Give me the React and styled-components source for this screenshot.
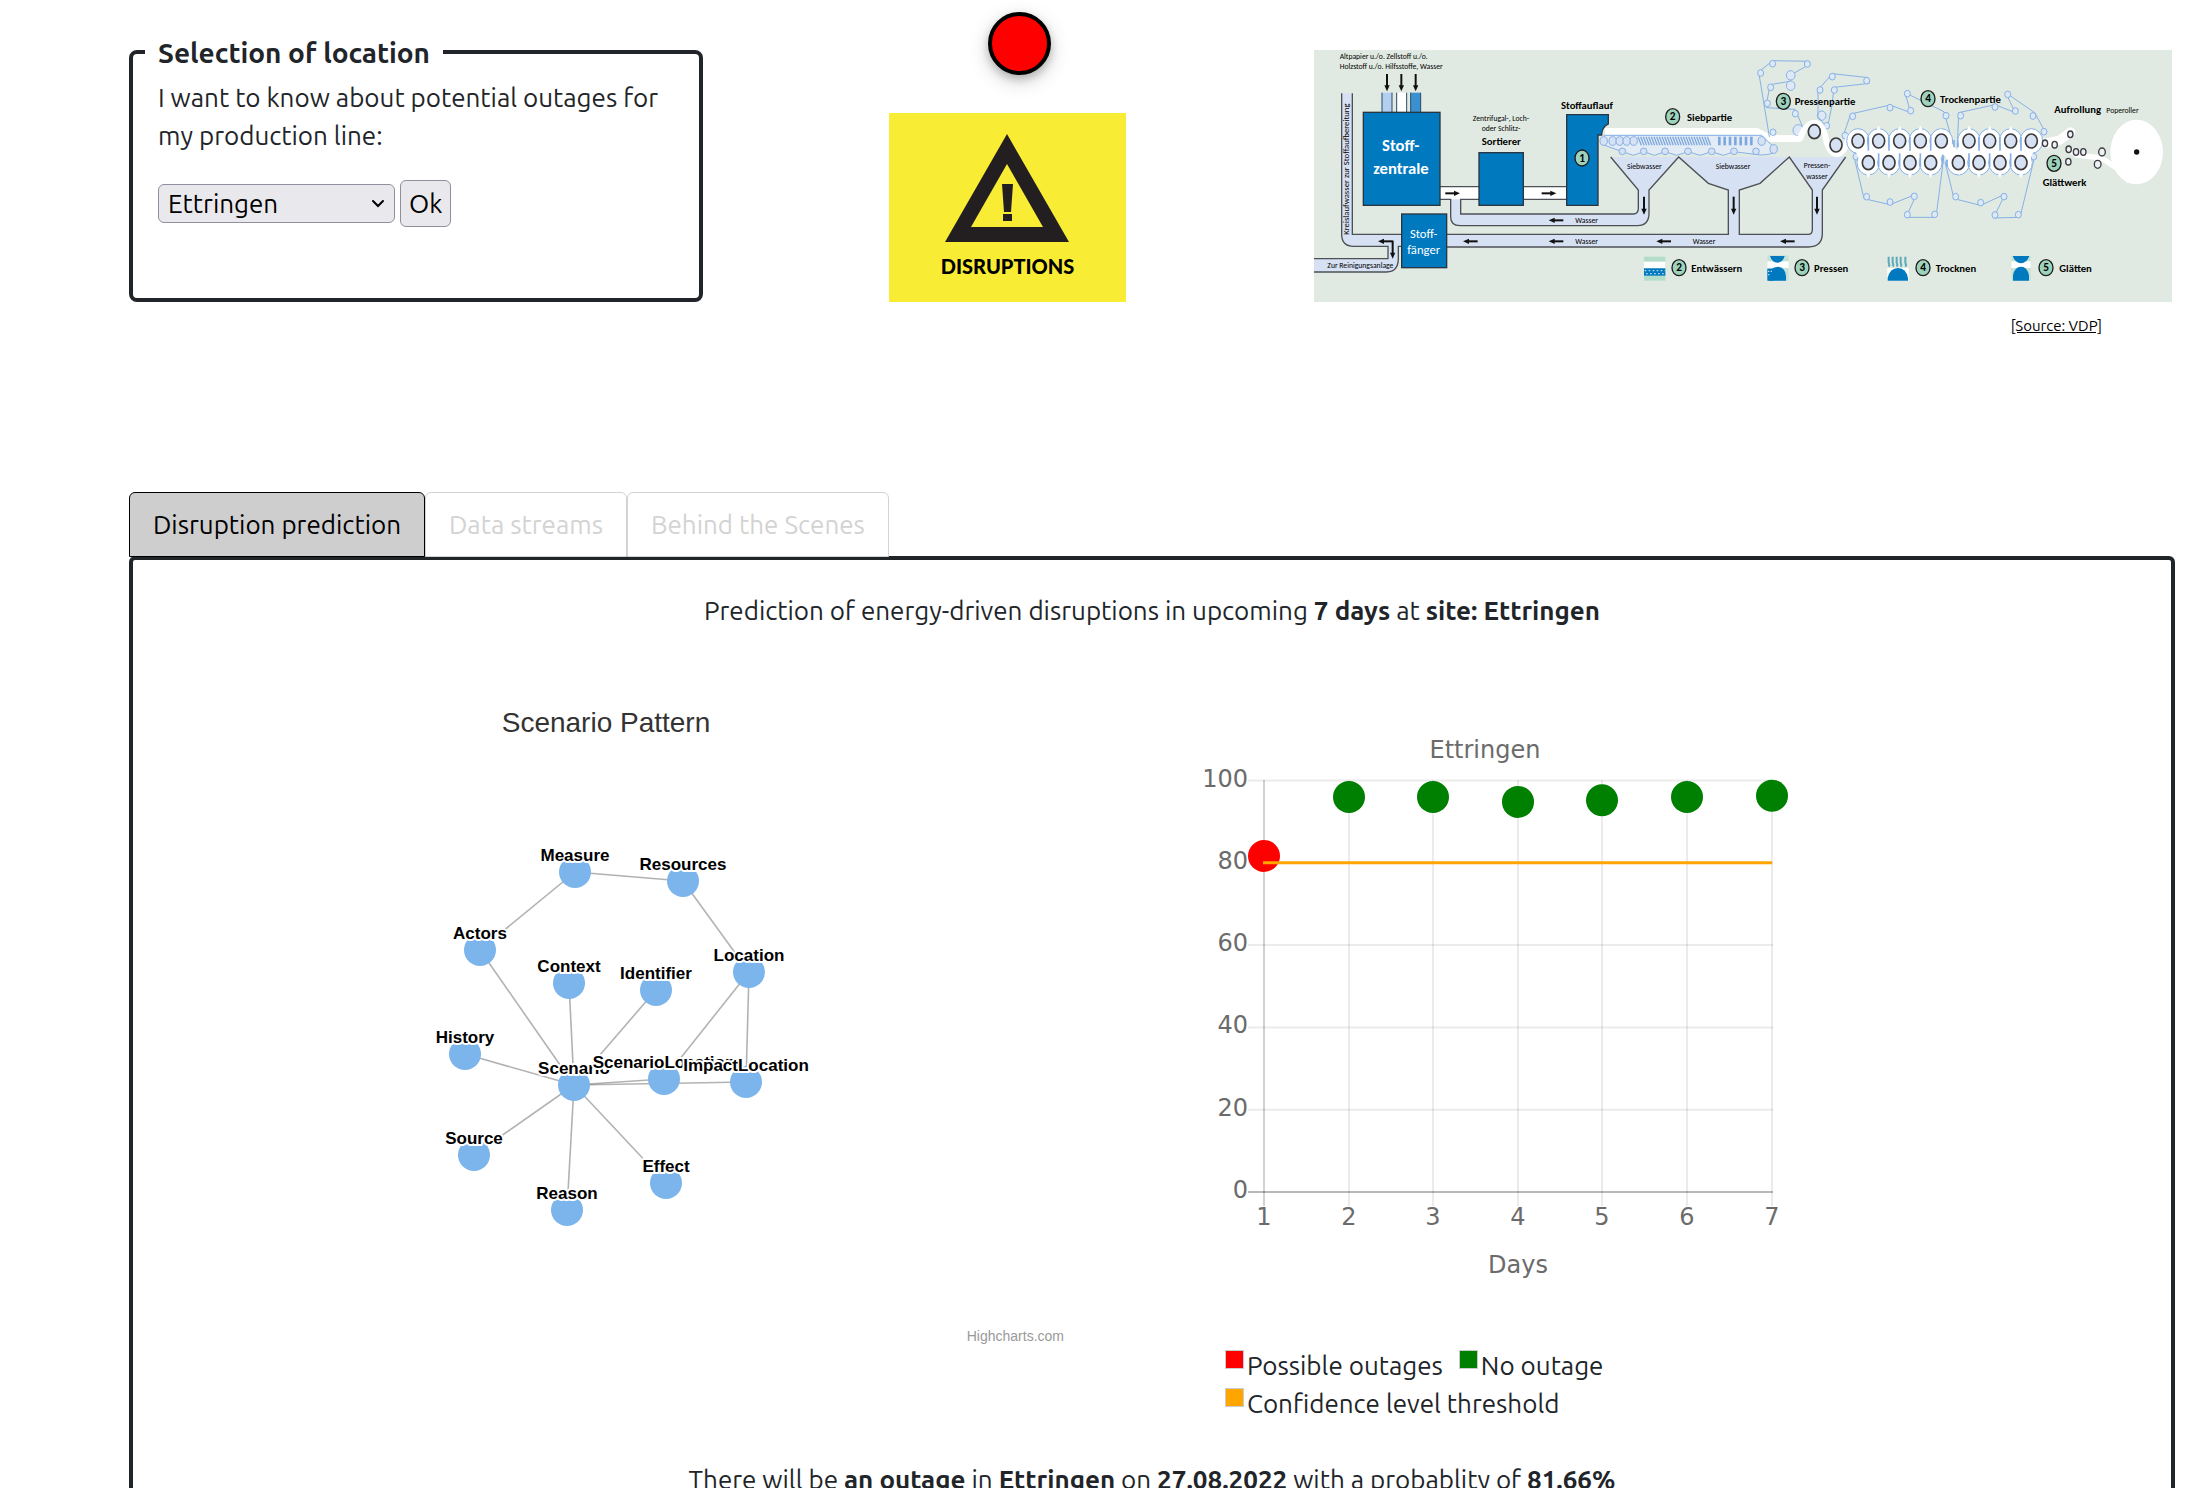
import React, { useState } from "react";
import styled, { createGlobalStyle } from "styled-components";

const INK = "#212529";
const UI_FONT = 'Ubuntu, "Noto Sans", "Open Sans", sans-serif';

const GlobalStyle = createGlobalStyle`
  *, *::before, *::after { box-sizing: border-box; }
  body {
    margin: 0;
    background: #fff;
    color: ${INK};
    font-family: ${UI_FONT};
    font-size: 26px;
    line-height: 38px;
    overflow-x: hidden;
  }
`;

/* ---------- page ---------- */

const Page = styled.div`
  padding: 0 15px 60px 129px;
`;

const TopRow = styled.header`
  display: grid;
  grid-template-columns: 574fr 611fr 858fr;
  align-items: end;
  padding: 12px 3px 0 0;
`;

const SourceRow = styled.div`
  display: flex;
  justify-content: flex-end;
  padding: 13px 73px 0 0;
  font-size: 15px;
  line-height: 22px;
`;

const SourceLink = styled.a`
  color: #000;
  text-decoration: underline;
`;

/* ---------- location form ---------- */

const LocationBox = styled.fieldset`
  min-width: 0;
  height: 271px;
  margin: 0;
  padding: 0 12px;
  border: 4px solid ${INK};
  border-radius: 8px;
`;

const LocationTitle = styled.legend`
  padding: 2px 13px 0;
  font-size: 28px;
  font-weight: 600;
  line-height: 40px;
`;

const LocationBody = styled.div`
  padding: 6px 13px 0;
`;

const Question = styled.label`
  display: block;
  margin-bottom: 25px;
`;

const Controls = styled.div`
  display: flex;
  align-items: center;
  gap: 5px;
`;

const SelectWrap = styled.div`
  display: grid;
  align-items: center;
  width: 237px;

  & > * { grid-area: 1 / 1; }
`;

const Select = styled.select`
  appearance: none;
  width: 100%;
  height: 39px;
  padding: 0 32px 0 9px;
  border: 1px solid #8f8f9d;
  border-radius: 6px;
  background: #e9e9ed;
  color: #000;
  font: inherit;
  line-height: 36px;
`;

const Chevron = styled.svg`
  justify-self: end;
  width: 14px;
  height: 9px;
  margin-right: 10px;
  pointer-events: none;
`;

const OkButton = styled.button`
  height: 47px;
  padding: 0 8px;
  border: 1px solid #8f8f9d;
  border-radius: 6px;
  background: #e9e9ed;
  color: #000;
  font: inherit;
`;

/* ---------- status ---------- */

const Status = styled.div`
  display: flex;
  flex-direction: column;
  align-items: center;
  gap: 38px;
  padding-right: 2px;
`;

const Lamp = styled.div`
  width: 63px;
  height: 63px;
  margin-left: 24px;
  border: 4px solid #000;
  border-radius: 50%;
  background: #f00;
  box-shadow: 0 4px 8px rgba(0, 0, 0, 0.2), 0 6px 20px rgba(0, 0, 0, 0.19);
`;

const WarningCard = styled.div`
  display: flex;
  flex-direction: column;
  align-items: center;
  gap: 11px;
  width: 237px;
  height: 189px;
  padding-top: 21px;
  background: #f8ec34;
  color: #000;
  font-family: Lato, sans-serif;
  font-size: 20px;
  font-weight: 900;
  line-height: 24px;
`;

const WarningSign = styled.svg`
  width: 125px;
  height: 109px;
`;

/* ---------- tabs and panel ---------- */

const TabBar = styled.div`
  display: flex;
  margin-top: 155px;
`;

const Tab = styled.button`
  position: relative;
  height: 65px;
  margin-bottom: -1px;
  padding: 0 23px;
  border: 1px solid ${(p) => (p.$active ? "#000" : "#d3d3d3")};
  border-radius: 6px 6px 0 0;
  background: ${(p) => (p.$active ? "#cecece" : "#fff")};
  color: ${(p) => (p.$active ? "#000" : "#d3d3d3")};
  font: inherit;
`;

const Panel = styled.main`
  padding: 32px 0 60px;
  border: 4px solid ${INK};
  border-radius: 6px;
`;

const Sentence = styled.p`
  margin: 0;
  text-align: center;
`;

const Charts = styled.div`
  display: grid;
  grid-template-columns: 947fr 1091fr;
  margin: 61px 0 38px;
`;

const Graph = styled.svg`
  display: block;
  width: 100%;
  font-family: "Liberation Sans", Arial, sans-serif;
`;

const Forecast = styled.section`
  padding: 33px 0 0 110px;
`;

const Plot = styled.svg`
  display: block;
  width: 620px;
  height: 562px;
  max-width: 100%;
  font-family: "DejaVu Sans", sans-serif;
  font-size: 24px;
  fill: #6b6b6b;
`;

const Legend = styled.ul`
  display: flex;
  flex-wrap: wrap;
  column-gap: 16px;
  max-width: 440px;
  margin: 61px 0 0;
  padding: 0 0 0 35px;
  list-style: none;
`;

const LegendItem = styled.li`
  display: flex;
  gap: 3px;
`;

const Swatch = styled.span`
  width: 19px;
  height: 19px;
  margin-top: 3px;
  border: 1px solid #ccc;
  background: ${(p) => p.$color};
`;

/* ---------- paper machine drawing ---------- */

const MachineSvg = styled.svg`
  display: block;
  width: 100%;
  font-family: Carlito, "Open Sans", sans-serif;
`;

const BLUE = "#0079bf";
const WATER = "#d7e1f4";
const BELT = "#86b1e6";

const Arrow = ({ x, y, turn = 0, len = 44 }) => (
  <g transform={`translate(${x} ${y}) rotate(${turn})`}>
    <path d={`M0 0H${len - 14}`} stroke="#111" strokeWidth="6" />
    <path d={`M${len} 0l-18 -8v16z`} fill="#111" />
  </g>
);

const Badge = ({ x, y, n }) => (
  <g>
    <ellipse cx={x} cy={y} rx="21" ry="24" fill="#9dd2bc" stroke="#1d1d1d" strokeWidth="4" />
    <text x={x} y={y + 11} fontSize="34" fontWeight="700" textAnchor="middle">{n}</text>
  </g>
);

const Belt = ({ points, dots = points, r = 9, closed }) => (
  <g fill="none" stroke={BELT} strokeWidth="3">
    {closed ? <polygon points={points.join(" ")} /> : <polyline points={points.join(" ")} />}
    {dots.map(([x, y], i) => (
      <ellipse key={i} cx={x} cy={y} rx={r} ry={r + 1} fill="#dfe8f5" />
    ))}
  </g>
);

const Roller = ({ x, y, rx = 18, ry = 21 }) => (
  <ellipse cx={x} cy={y} rx={rx} ry={ry} fill={WATER} stroke="#3b3b3b" strokeWidth="5" />
);

const upper = [354, 416, 479, 541, 604, 687, 749, 812, 874];
const lower = [385, 447, 510, 572, 655, 717, 780, 843];
const weave = (from, to) =>
  [...upper.map((x) => [x, 303]), ...lower.map((x) => [x, 368])]
    .filter(([x]) => x >= from && x <= to)
    .sort((a, b) => a[0] - b[0]);

function PaperMachine() {
  return (
    <MachineSvg viewBox="0 0 2574 756" role="img" aria-label="Papiermaschine">
      <rect width="2574" height="756" fill="#e0eae2" />
      <g transform="translate(-42 -30)">
        <g fill={WATER}>
          <path d="M125 160H157V583H305V619H295V655Q295 696 260 696H42V656H264V619H161Q125 619 125 583Z" />
          <path d="M440 583H1285V450L1225 430L1136 351L1047 450V520Q1047 557 1012 557H480Q452 557 452 530V478H482V522H1000Q1015 522 1015 505V450L932 351H1637L1567 450V580Q1567 621 1525 621H440Z" />
        </g>
        <path d="M452 557H1047V583H452ZM1047 450L1136 351L1225 430L1285 450V583H1047ZM1318 583V450L1380 430L1468 351L1537 450V583Z" fill="#e0eae2" />
        <path d="M452 530V478H482V522H1000Q1015 522 1015 505V450H1047V520Q1047 557 1012 557H480Q452 557 452 530Z" fill={WATER} />
        <rect x="420" y="440" width="380" height="38" fill="#fff" />
        <g fill="none" stroke="#4d5055" strokeWidth="4">
          <path d="M125 160V583Q125 619 161 619H264V656H42M157 160V583H305M305 619H295V655Q295 696 260 696H42" />
          <path d="M440 583H1285V450L1225 430L1136 351L1047 450V520Q1047 557 1012 557H480Q452 557 452 530V478H420M420 440H800M800 478H482V522H1000Q1015 522 1015 505V450L932 351" />
          <path d="M1318 583V450L1380 430L1468 351L1537 450V570Q1537 583 1524 583ZM440 621H1525Q1567 621 1567 580V450L1637 351" />
        </g>
        <g stroke="#2b4a66" strokeWidth="3">
          <rect x="246" y="158" width="30" height="60" fill="#b3cef0" stroke="none" />
          <rect x="290" y="158" width="30" height="60" fill="#fff" stroke="none" />
          <rect x="332" y="158" width="30" height="60" fill="#3b90d2" stroke="none" />
          <path d="M246 158V218M276 158V218M290 158V218M320 158V218M332 158V218M362 158V218" />
        </g>
        <g fill={BLUE} stroke="#2a3540" strokeWidth="4">
          <rect x="190" y="217" width="230" height="279" />
          <rect x="537" y="338" width="133" height="158" />
          <rect x="305" y="522" width="135" height="161" />
          <path d="M800 224H925V252Q905 262 905 285H894V496H800Z" />
        </g>
        {[261, 304, 347].map((x) => <Arrow key={x} x={x} y={102} turn={90} len={52} />)}
        <Arrow x={436} y={460} />
        <Arrow x={725} y={460} />
        <Arrow x={790} y={541} turn={180} />
        <Arrow x={790} y={604} turn={180} />
        <Arrow x={533} y={604} turn={180} />
        <Arrow x={1113} y={604} turn={180} />
        <Arrow x={1484} y={604} turn={180} />
        <Arrow x={278} y={604} turn={180} />
        <Arrow x={278} y={602} turn={90} len={54} />
        <Arrow x={1032} y={470} turn={90} len={54} />
        <Arrow x={1301} y={470} turn={90} len={54} />
        <Arrow x={1551} y={470} turn={90} len={54} />

        <path d="M915 274H1370L1412 296H1495" fill="none" stroke="#fff" strokeWidth="20" />
        <path d="M911 286H1385L1430 330Q1420 345 1380 345L1302 335L1270 346L1235 335L1200 346L1164 335L1130 346L1095 335L1063 346L1031 335L1000 346L967 335L903 312" fill="#e3ecf4" stroke={BELT} strokeWidth="3" />
        <g fill={WATER} stroke={BELT} strokeWidth="3">
          {[911, 938, 959, 980, 1001, 1385, 1421].map((x) => (
            <ellipse key={x} cx={x} cy={x === 1421 ? 327 : 303} rx="11" ry="13" />
          ))}
          {[967, 1031, 1095, 1164, 1235, 1302, 1368].map((x) => (
            <circle key={x} cx={x} cy="334" r="10" />
          ))}
        </g>
        <g stroke="#7fa9de" strokeWidth="4">
          {Array.from({ length: 27 }, (_, i) => (
            <path key={i} d={`M${1014 + i * 8} 290l10 26`} />
          ))}
          {Array.from({ length: 7 }, (_, i) => (
            <path key={i} strokeWidth="8" d={`M${1258 + i * 16} 290v26`} />
          ))}
        </g>

        <g fontSize="23">
          <text x="119" y="57">Altpapier u./o. Zellstoff u./o.</text>
          <text x="119" y="88">Holzstoff u./o. Hilfsstoffe, Wasser</text>
          <text x="603" y="243" textAnchor="middle">Zentrifugal-, Loch-</text>
          <text x="603" y="273" textAnchor="middle">oder Schlitz-</text>
          <text x="1033" y="388" textAnchor="middle">Siebwasser</text>
          <text x="1299" y="388" textAnchor="middle">Siebwasser</text>
          <text x="1551" y="383" textAnchor="middle">Pressen-</text>
          <text x="1551" y="416" textAnchor="middle">wasser</text>
          <text x="860" y="549" textAnchor="middle">Wasser</text>
          <text x="860" y="612" textAnchor="middle">Wasser</text>
          <text x="1212" y="612" textAnchor="middle">Wasser</text>
          <text x="82" y="685">Zur Reinigungsanlage</text>
          <text transform="translate(148 584) rotate(-90)" fontSize="26">Kreislaufwasser zur Stoffaufbereitung</text>
        </g>
        <g fontSize="32" fontWeight="700">
          <text x="783" y="207">Stoffauflauf</text>
          <text x="604" y="315" textAnchor="middle">Sortierer</text>
          <text x="1161" y="242">Siebpartie</text>
          <text x="1174" y="695">Entwässern</text>
        </g>
        <g fill="#fff" textAnchor="middle">
          <text x="302" y="332" fontSize="50" fontWeight="700">Stoff-</text>
          <text x="303" y="403" fontSize="50" fontWeight="700">zentrale</text>
          <text x="371" y="594" fontSize="38">Stoff-</text>
          <text x="371" y="642" fontSize="38">fänger</text>
        </g>
        <Badge x={846} y={354} n="1" />
        <Badge x={1118} y={230} n="2" />
        <Badge x={1137} y={683} n="2" />
        <rect x="1032" y="650" width="64" height="72" fill="#b3dccb" />
        <rect x="1032" y="665" width="64" height="20" fill="#fff" />
        <rect x="1032" y="685" width="64" height="22" fill={BLUE} />
        <path d="M1034 692H1096M1038 701H1096" stroke="#bcd8ef" strokeWidth="4" strokeDasharray="5 7" />
      </g>

      <g transform="translate(1278 -30)">
        <Belt closed points={[[98, 62], [208, 64], [200, 78], [152, 105], [150, 124], [90, 134], [80, 190], [80, 203], [165, 208], [190, 265], [175, 292], [88, 290], [56, 96]]} dots={[[98, 71], [202, 72], [62, 99], [92, 142], [82, 190], [166, 221], [99, 277]]} />
        <Belt points={[]} dots={[[152, 106], [152, 137], [245, 227]]} r={13} />
        <Belt points={[]} dots={[[175, 271]]} r={16} />
        <Belt closed points={[[277, 101], [385, 113], [388, 130], [282, 142], [276, 196], [262, 264], [234, 230], [234, 150]]} dots={[[277, 110], [380, 122], [240, 150], [283, 150], [260, 257]]} />
        <Belt points={[[309, 290], [332, 222], [450, 195], [512, 218], [495, 158], [612, 215], [642, 322]]} dots={[[315, 287], [338, 229], [450, 203], [512, 212], [502, 161], [618, 227]]} />
        <Belt points={[[652, 322], [656, 218], [765, 194], [826, 218], [797, 158], [884, 218], [918, 280]]} dots={[[662, 227], [765, 201], [826, 213], [803, 163], [879, 228], [912, 275]]} />
        <Belt points={[[342, 350], [372, 476], [450, 494], [530, 462], [498, 532], [588, 532], [612, 345]]} dots={[[348, 350], [380, 470], [450, 486], [523, 469], [502, 524], [584, 523]]} />
        <Belt points={[[615, 365], [642, 476], [722, 496], [796, 462], [760, 534], [840, 532], [884, 350]]} dots={[[647, 470], [722, 488], [792, 470], [765, 525], [835, 524], [881, 350]]} />

        <g fill="none" stroke="#fff" strokeLinejoin="round">
          <path d="M90 296H180Q196 250 223 248Q250 250 258 300Q270 342 290 342Q312 340 322 304Q332 276 354 274" strokeWidth="18" />
          <path d="M874 300L915 310L960 300L992 276" strokeWidth="28" strokeLinecap="round" />
          <path d="M986 328L1010 345L1085 354L1140 392" strokeWidth="16" strokeLinecap="round" />
        </g>
        <g fill="#fff" stroke={BELT} strokeWidth="3">
          {weave(300, 900).map(([x, y]) => (
            <ellipse key={x} cx={x} cy={y} rx="34" ry="37" />
          ))}
        </g>
        <polyline points={weave(300, 900).join(" ")} fill="none" stroke="#fff" strokeWidth="40" />
        <g stroke={BELT} strokeWidth="5">
          {[385, 447, 510, 572, 717, 780, 843].map((x) => <path key={x} d={`M${x} 290v42`} />)}
          {[416, 479, 541, 687, 749, 812].map((x) => <path key={x} d={`M${x} 340v42`} />)}
          <path d="M642 300v22M653 300v22M608 345v26M620 360v20" />
        </g>
        {weave(300, 900).map(([x, y]) => <Roller key={x} x={x} y={y} />)}
        <Roller x={223} y={275} />
        <Roller x={288} y={315} />
        <ellipse cx="1190" cy="336" rx="79" ry="97" fill="#fff" />
        <path d="M1120 380L1160 428L1190 433L1180 360Z" fill="#fff" />
        <circle cx="1190" cy="336" r="8" fill="#111" />
        <g fill="#eef1f4" stroke="#3d3d44" strokeWidth="4">
          {[[915, 310], [944, 314], [991, 283], [986, 328], [1008, 336], [1030, 336], [985, 365]].map(([x, y]) => (
            <ellipse key={`${x}-${y}`} cx={x} cy={y} rx="8" ry="10" />
          ))}
          <ellipse cx="1086" cy="336" rx="10" ry="12" />
          <ellipse cx="1073" cy="373" rx="10" ry="12" />
        </g>

        <g fontSize="32" fontWeight="700">
          <text x="164" y="196">Pressenpartie</text>
          <text x="600" y="188">Trockenpartie</text>
          <text x="943" y="220">Aufrollung</text>
          <text x="908" y="438">Glättwerk</text>
          <text x="222" y="695">Pressen</text>
          <text x="587" y="695">Trocknen</text>
          <text x="958" y="695">Glätten</text>
        </g>
        <text x="1099" y="218" fontSize="23">Poperoller</text>
        <Badge x={130} y={184} n="3" />
        <Badge x={564} y={176} n="4" />
        <Badge x={942} y={370} n="5" />
        <Badge x={186} y={683} n="3" />
        <Badge x={549} y={683} n="4" />
        <Badge x={918} y={683} n="5" />

        <g fill={BLUE}>
          <rect x="82" y="646" width="64" height="76" fill="#c6e2d6" />
          <path d="M82 664H146V684H82Z" fill="#fff" />
          <path d="M90 648H134Q128 668 112 668Q96 668 90 648Z" />
          <path d="M86 722V712Q88 680 114 680Q136 682 138 708V722Z" />
          <path d="M82 686H100V722H82Z" />
          <path d="M84 694H96M84 704H92" stroke="#bcd8ef" strokeWidth="4" strokeDasharray="4 4" />
          <path d="M442 684H506V722H442Z" fill="#fff" />
          <path d="M443 722V714Q450 684 474 684Q498 684 504 714V722Z" />
          <path d="M446 650v18q4 6 0 12M458 650v18q4 6 0 12M470 650v18q4 6 0 12M482 650v18q4 6 0 12M496 650v18q4 6 0 12" fill="none" stroke="#5fa9b8" strokeWidth="6" />
          <path d="M814 648H872V722H814Z" fill="#c6e2d6" />
          <path d="M814 664H872V684H814Z" fill="#fff" />
          <path d="M818 648H868Q860 670 843 670Q826 670 818 648Z" />
          <path d="M819 722V706Q824 680 843 680Q862 680 867 706V722Z" />
        </g>
      </g>
    </MachineSvg>
  );
}

/* ---------- scenario graph ---------- */

const nodes = {
  Scenario: [574, 1085],
  Measure: [575, 872],
  Resources: [683, 881],
  Actors: [480, 950],
  Context: [569, 983],
  Identifier: [656, 990],
  Location: [749, 972],
  History: [465, 1054],
  ScenarioLocation: [664, 1079],
  ImpactLocation: [746, 1082],
  Source: [474, 1155],
  Reason: [567, 1210],
  Effect: [666, 1183],
};

const links = [
  ["Measure", "Resources"], ["Measure", "Actors"], ["Resources", "Location"],
  ["Actors", "Scenario"], ["Context", "Scenario"], ["Identifier", "Scenario"],
  ["History", "Scenario"], ["Source", "Scenario"], ["Reason", "Scenario"],
  ["Effect", "Scenario"], ["ScenarioLocation", "Scenario"], ["ImpactLocation", "Scenario"],
  ["Location", "ScenarioLocation"], ["Location", "ImpactLocation"],
];

function ScenarioGraph() {
  return (
    <Graph viewBox="133 691 947 658" role="img" aria-label="Scenario Pattern">
      <text x="606" y="732" fontSize="28" fill="#333" textAnchor="middle">Scenario Pattern</text>
      <g stroke="#666" strokeOpacity="0.5" strokeWidth="1.6">
        {links.map(([a, b]) => (
          <line key={a + b} x1={nodes[a][0]} y1={nodes[a][1]} x2={nodes[b][0]} y2={nodes[b][1]} />
        ))}
      </g>
      <g fill="#7cb5ec">
        {Object.entries(nodes).map(([name, [x, y]]) => <circle key={name} cx={x} cy={y} r="16" />)}
      </g>
      <g fontSize="17" fontWeight="700" textAnchor="middle" stroke="#fff" strokeWidth="4" strokeLinejoin="round" paintOrder="stroke">
        {Object.entries(nodes).map(([name, [x, y]]) => <text key={name} x={x} y={y - 11}>{name}</text>)}
      </g>
      <text x="1064" y="1341" fontSize="14" fill="#999" textAnchor="end">Highcharts.com</text>
    </Graph>
  );
}

/* ---------- forecast chart ---------- */

const days = [81.66, 96, 96, 94.8, 95.2, 96, 96.3];
const dayX = (i) => Math.round(1264 + i * 84.6);
const valueY = (v) => 1192 - v * 4.115;

function ForecastChart() {
  return (
    <Plot viewBox="1190 724 620 562" role="img" aria-label="Ettringen">
      <text x="1485" y="758" textAnchor="middle">Ettringen</text>
      {[0, 20, 40, 60, 80, 100].map((v) => (
        <g key={v}>
          <line x1="1248" x2="1773" y1={valueY(v)} y2={valueY(v)} stroke="#000" strokeOpacity={v ? 0.08 : 0.28} strokeWidth="2" />
          <text x="1248" y={valueY(v) + 6} textAnchor="end">{v}</text>
        </g>
      ))}
      {days.map((v, i) => (
        <g key={i}>
          <line x1={dayX(i)} x2={dayX(i)} y1="780" y2="1206" stroke="#000" strokeOpacity={i ? 0.08 : 0.18} strokeWidth="2" />
          <text x={dayX(i)} y="1225" textAnchor="middle">{i + 1}</text>
        </g>
      ))}
      <text x="1518" y="1273" textAnchor="middle">Days</text>
      {days.map((v, i) => (
        <circle key={i} cx={dayX(i)} cy={valueY(v)} r="16" fill={i ? "green" : "red"} />
      ))}
      <line x1="1263" x2="1772" y1={valueY(80)} y2={valueY(80)} stroke="orange" strokeWidth="3" />
    </Plot>
  );
}

const legend = [
  ["red", "Possible outages"],
  ["green", "No outage"],
  ["orange", "Confidence level threshold"],
];

const tabs = ["Disruption prediction", "Data streams", "Behind the Scenes"];

export default function App() {
  const [tab, setTab] = useState(0);
  return (
    <Page>
      <GlobalStyle />
      <TopRow>
        <LocationBox>
          <LocationTitle>Selection of location</LocationTitle>
          <LocationBody>
            <Question htmlFor="site">
              I want to know about potential outages for my production line:
            </Question>
            <Controls>
              <SelectWrap>
                <Select id="site" defaultValue="Ettringen">
                  <option>Ettringen</option>
                </Select>
                <Chevron viewBox="0 0 14 9" aria-hidden="true">
                  <path d="M2 2l5 5 5-5" fill="none" stroke="#000" strokeWidth="2" strokeLinecap="round" />
                </Chevron>
              </SelectWrap>
              <OkButton type="button">Ok</OkButton>
            </Controls>
          </LocationBody>
        </LocationBox>
        <Status>
          <Lamp />
          <WarningCard>
            <WarningSign viewBox="0 0 125 109" aria-hidden="true">
              <path fillRule="evenodd" fill="#231f20" d="M62 0L124 108H0ZM62 30L26 93H98Z" />
              <path fill="#231f20" d="M57 50H68L66 78H59ZM58 80H67V87H58Z" />
            </WarningSign>
            DISRUPTIONS
          </WarningCard>
        </Status>
        <PaperMachine />
      </TopRow>
      <SourceRow>
        <SourceLink href="#vdp">[Source: VDP]</SourceLink>
      </SourceRow>

      <TabBar role="tablist">
        {tabs.map((name, i) => (
          <Tab key={name} role="tab" aria-selected={tab === i} $active={tab === i} onClick={() => setTab(i)}>
            {name}
          </Tab>
        ))}
      </TabBar>
      <Panel>
        <Sentence>
          Prediction of energy-driven disruptions in upcoming <b>7 days</b> at <b>site: Ettringen</b>
        </Sentence>
        <Charts>
          <ScenarioGraph />
          <Forecast>
            <ForecastChart />
            <Legend>
              {legend.map(([color, name]) => (
                <LegendItem key={name}>
                  <Swatch $color={color} />
                  {name}
                </LegendItem>
              ))}
            </Legend>
          </Forecast>
        </Charts>
        <Sentence>
          There will be <b>an outage</b> in <b>Ettringen</b> on <b>27.08.2022</b> with a probablity of <b>81.66%</b>
        </Sentence>
      </Panel>
    </Page>
  );
}
